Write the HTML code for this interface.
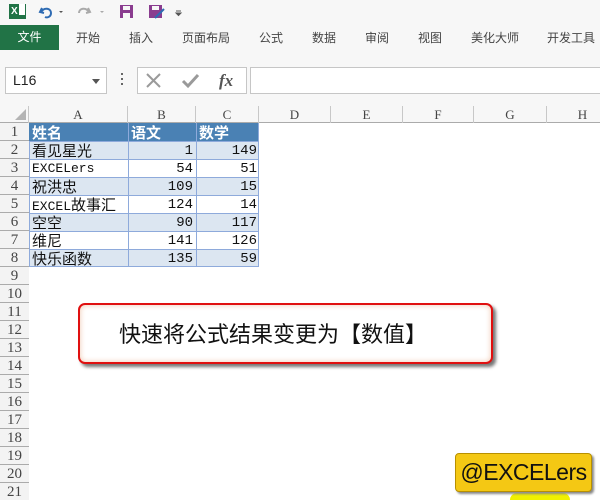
<!DOCTYPE html>
<html style="width:600px;height:500px;overflow:hidden"><head><meta charset="utf-8"><style>
*{margin:0;padding:0;box-sizing:border-box}
body{width:600px;height:500px;overflow:hidden;background:#fff;position:relative;font-family:"Liberation Sans","Noto Sans CJK SC",sans-serif;font-size:12px;color:#333}
.abs{position:absolute}
.top{left:0;top:0;width:600px;height:106px;background:#f7f7f7}
.tab{position:absolute;top:29px;font-size:12px;color:#444}
.cell{position:absolute;height:18px;line-height:20px;font-family:"Liberation Mono","Noto Sans CJK SC",monospace;font-size:14px;color:#111;white-space:nowrap;overflow:hidden}
.cj{font-family:"Noto Sans CJK SC",sans-serif;font-size:15px;line-height:19px}
.rh{position:absolute;left:0;width:29px;height:18px;line-height:19px;text-align:center;background:#f3f3f3;border-bottom:1px solid #ababab;font-family:"Liberation Serif",serif;font-size:15px;color:#444}
.ch{position:absolute;top:106px;height:17px;line-height:17px;text-align:center;font-family:"Liberation Serif",serif;font-size:13px;color:#444;border-right:1px solid #c8c8c8}
</style></head><body>
<div class="abs top"></div>
<div class="abs" style="left:9px;top:4px;width:17px;height:15px;background:#217346;color:#fff;font-size:10px;font-weight:bold;line-height:15px;padding-left:2px">X<span style="display:inline-block;width:6px;height:11px;background:#fff;margin-left:1px;vertical-align:-1px"></span></div>
<svg class="abs" style="left:38px;top:3px" width="150" height="18">
<path d="M4 5 L2 9 L6 10 M3 9 C6 4 13 5 13 10 C13 14 9 15 7 14" stroke="#2e6bb3" stroke-width="2" fill="none"/>
<path d="M21 8 l2 2 l2-2z" fill="#555"/>
<path d="M50 5 L52 9 L48 10 M51 9 C48 4 41 5 41 10" stroke="#aaa" stroke-width="2" fill="none"/>
<path d="M62 8 l2 2 l2-2z" fill="#aaa"/>
<rect x="82" y="2" width="13" height="13" fill="#8a3c8f"/><rect x="85" y="3" width="7" height="4" fill="#f7f7f7"/><rect x="85" y="10" width="7" height="5" fill="#f7f7f7"/>
<rect x="111" y="2" width="13" height="13" fill="#8a3c8f"/><rect x="114" y="3" width="7" height="4" fill="#f7f7f7"/><path d="M117 15 L126 6" stroke="#2e6bb3" stroke-width="2"/>
<path d="M138 8 h5 M138 10 l2.5 2.5 l2.5-2.5z" stroke="#555" fill="#555"/>
</svg>
<div class="abs" style="left:0;top:25px;width:59px;height:25px;background:#217346;color:#fff;font-size:12px;line-height:24px;text-align:center">文件</div>
<div class="tab" style="left:76px">开始</div>
<div class="tab" style="left:129px">插入</div>
<div class="tab" style="left:182px">页面布局</div>
<div class="tab" style="left:259px">公式</div>
<div class="tab" style="left:312px">数据</div>
<div class="tab" style="left:365px">审阅</div>
<div class="tab" style="left:418px">视图</div>
<div class="tab" style="left:471px">美化大师</div>
<div class="tab" style="left:547px">开发工具</div>
<div class="abs" style="left:5px;top:67px;width:102px;height:27px;background:#fff;border:1px solid #c6c6c6;font-size:14px;line-height:25px;padding-left:7px;color:#222">L16<span style="position:absolute;right:6px;top:11px;border:4px solid transparent;border-top:5px solid #555"></span></div>
<div class="abs" style="left:121px;top:73px;width:2px;height:14px;background:repeating-linear-gradient(#666 0 2px,transparent 2px 5px)"></div>
<div class="abs" style="left:137px;top:67px;width:110px;height:27px;background:#fff;border:1px solid #c6c6c6"></div>
<svg class="abs" style="left:137px;top:67px" width="110" height="27">
<path d="M10 7 L23 20 M23 7 L10 20" stroke="#9a9a9a" stroke-width="2"/>
<path d="M46 14 L51 19 L61 8" stroke="#9a9a9a" stroke-width="3" fill="none"/>
<text x="82" y="19" font-family="Liberation Serif" font-style="italic" font-weight="bold" font-size="17" fill="#555">fx</text>
</svg>
<div class="abs" style="left:250px;top:67px;width:352px;height:27px;background:#fff;border:1px solid #c6c6c6"></div>
<div class="abs" style="left:0;top:106px;width:600px;height:17px;background:#f7f7f7;border-bottom:1px solid #ababab"></div>
<svg class="abs" style="left:14px;top:108px" width="14" height="14"><path d="M12 1 L12 12 L1 12z" fill="#b4b4b4"/></svg>
<div class="ch" style="left:0;width:29px"></div>
<div class="ch" style="left:29px;width:99px">A</div>
<div class="ch" style="left:128px;width:68px">B</div>
<div class="ch" style="left:196px;width:63px">C</div>
<div class="ch" style="left:259px;width:72px">D</div>
<div class="ch" style="left:331px;width:72px">E</div>
<div class="ch" style="left:403px;width:71px">F</div>
<div class="ch" style="left:474px;width:73px">G</div>
<div class="ch" style="left:547px;width:72px">H</div>
<div class="abs" style="left:0;top:123px;width:29px;height:377px;background:#f3f3f3;border-right:1px solid #ababab"></div>
<div class="rh" style="top:123px">1</div><div class="rh" style="top:141px">2</div><div class="rh" style="top:159px">3</div><div class="rh" style="top:177px">4</div><div class="rh" style="top:195px">5</div><div class="rh" style="top:213px">6</div><div class="rh" style="top:231px">7</div><div class="rh" style="top:249px">8</div><div class="rh" style="top:267px">9</div><div class="rh" style="top:285px">10</div><div class="rh" style="top:303px">11</div><div class="rh" style="top:321px">12</div><div class="rh" style="top:339px">13</div><div class="rh" style="top:357px">14</div><div class="rh" style="top:375px">15</div><div class="rh" style="top:393px">16</div><div class="rh" style="top:411px">17</div><div class="rh" style="top:429px">18</div><div class="rh" style="top:447px">19</div><div class="rh" style="top:465px">20</div><div class="rh" style="top:483px">21</div>
<svg class="abs" style="left:29px;top:123px" width="231" height="145">
<rect x="0" y="0" width="230" height="18" fill="#4a81b4"/>
<rect x="0" y="18" width="230" height="18" fill="#dce6f1"/>
<rect x="0" y="54" width="230" height="18" fill="#dce6f1"/>
<rect x="0" y="90" width="230" height="18" fill="#dce6f1"/>
<rect x="0" y="126" width="230" height="18" fill="#dce6f1"/>
<g stroke="#8eaadb" stroke-width="1">
<path d="M0 18.5h230M0 36.5h230M0 54.5h230M0 72.5h230M0 90.5h230M0 108.5h230M0 126.5h230M0 143.5h230"/>
<path d="M0.5 18v126M99.5 0v144M167.5 0v144M229.5 0v144"/>
</g>
</svg>
<div class="cell cj" style="left:32px;top:123px;color:#fff;font-weight:bold">姓名</div>
<div class="cell cj" style="left:131px;top:123px;color:#fff;font-weight:bold">语文</div>
<div class="cell cj" style="left:199px;top:123px;color:#fff;font-weight:bold">数学</div>
<div class="cell cj" style="left:32px;top:141px">看见星光</div>
<div class="cell" style="left:32px;top:159px;font-size:13px">EXCELers</div>
<div class="cell cj" style="left:32px;top:177px">祝洪忠</div>
<div class="cell" style="left:32px;top:195px;font-size:13px">EXCEL<span style="font-family:'Noto Sans CJK SC';font-size:15px">故事汇</span></div>
<div class="cell cj" style="left:32px;top:213px">空空</div>
<div class="cell cj" style="left:32px;top:231px">维尼</div>
<div class="cell cj" style="left:32px;top:249px">快乐函数</div>
<div class="cell" style="left:128px;width:65px;text-align:right;top:141px">1</div>
<div class="cell" style="left:128px;width:65px;text-align:right;top:159px">54</div>
<div class="cell" style="left:128px;width:65px;text-align:right;top:177px">109</div>
<div class="cell" style="left:128px;width:65px;text-align:right;top:195px">124</div>
<div class="cell" style="left:128px;width:65px;text-align:right;top:213px">90</div>
<div class="cell" style="left:128px;width:65px;text-align:right;top:231px">141</div>
<div class="cell" style="left:128px;width:65px;text-align:right;top:249px">135</div>
<div class="cell" style="left:196px;width:61px;text-align:right;top:141px">149</div>
<div class="cell" style="left:196px;width:61px;text-align:right;top:159px">51</div>
<div class="cell" style="left:196px;width:61px;text-align:right;top:177px">15</div>
<div class="cell" style="left:196px;width:61px;text-align:right;top:195px">14</div>
<div class="cell" style="left:196px;width:61px;text-align:right;top:213px">117</div>
<div class="cell" style="left:196px;width:61px;text-align:right;top:231px">126</div>
<div class="cell" style="left:196px;width:61px;text-align:right;top:249px">59</div>
<div class="abs" style="left:78px;top:303px;width:415px;height:61px;background:#fff;border:2px solid #e01010;border-radius:7px;box-shadow:3px 3px 3px #777, inset 0 0 6px #f0c8b0"></div>
<div class="abs" style="left:119px;top:318px;font-family:'Noto Sans CJK SC',sans-serif;font-size:22px;line-height:30px;color:#111;white-space:nowrap">快速将公式结果变更为【数值】</div>
<div class="abs" style="left:510px;top:493px;width:60px;height:7px;background:#f0f000;border-radius:30px 30px 0 0"></div>
<div class="abs" style="left:455px;top:453px;width:137px;height:39px;background:#f4c814;border:1px solid #b89000;border-radius:4px;box-shadow:2px 2px 2px #888;font-size:23px;line-height:37px;text-align:center;color:#111;letter-spacing:-0.5px">@EXCELers</div>
</body></html>
